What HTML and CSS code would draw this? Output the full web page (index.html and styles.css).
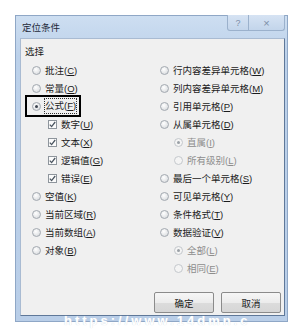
FILE: index.html
```html
<!DOCTYPE html>
<html lang="zh">
<head>
<meta charset="utf-8">
<link rel="stylesheet" href="styles.css">
</head>
<body>
<div class="window">
  <div class="titlebar">
    <span class="title">定位条件</span>
    <div class="tbtns">
      <span class="tbtn help">?</span>
      <span class="tbtn close">×</span>
    </div>
  </div>
  <div class="panel">
    <div class="label">选择</div>
    <div class="cols">
      <div class="col left">
        <div class="row"><span class="radio"></span><span>批注(<u>C</u>)</span></div>
        <div class="row"><span class="radio"></span><span>常量(<u>O</u>)</span></div>
        <div class="row"><span class="mark"><span class="radio on"></span><span class="focus">公式(<u>F</u>)</span></span></div>
        <div class="row sub"><span class="check"><svg viewBox="0 0 9 9" width="9" height="9"><polyline points="1.8,4.6 3.6,6.6 7.2,2" fill="none" stroke="#4b5560" stroke-width="1.3"/></svg></span><span>数字(<u>U</u>)</span></div>
        <div class="row sub"><span class="check"><svg viewBox="0 0 9 9" width="9" height="9"><polyline points="1.8,4.6 3.6,6.6 7.2,2" fill="none" stroke="#4b5560" stroke-width="1.3"/></svg></span><span>文本(<u>X</u>)</span></div>
        <div class="row sub"><span class="check"><svg viewBox="0 0 9 9" width="9" height="9"><polyline points="1.8,4.6 3.6,6.6 7.2,2" fill="none" stroke="#4b5560" stroke-width="1.3"/></svg></span><span>逻辑值(<u>G</u>)</span></div>
        <div class="row sub"><span class="check"><svg viewBox="0 0 9 9" width="9" height="9"><polyline points="1.8,4.6 3.6,6.6 7.2,2" fill="none" stroke="#4b5560" stroke-width="1.3"/></svg></span><span>错误(<u>E</u>)</span></div>
        <div class="row"><span class="radio"></span><span>空值(<u>K</u>)</span></div>
        <div class="row"><span class="radio"></span><span>当前区域(<u>R</u>)</span></div>
        <div class="row"><span class="radio"></span><span>当前数组(<u>A</u>)</span></div>
        <div class="row"><span class="radio"></span><span>对象(<u>B</u>)</span></div>
      </div>
      <div class="col right">
        <div class="row"><span class="radio"></span><span>行内容差异单元格(<u>W</u>)</span></div>
        <div class="row"><span class="radio"></span><span>列内容差异单元格(<u>M</u>)</span></div>
        <div class="row"><span class="radio"></span><span>引用单元格(<u>P</u>)</span></div>
        <div class="row"><span class="radio"></span><span>从属单元格(<u>D</u>)</span></div>
        <div class="row sub2 dis"><span class="radio on"></span><span>直属(<u>I</u>)</span></div>
        <div class="row sub2 dis"><span class="radio"></span><span>所有级别(<u>L</u>)</span></div>
        <div class="row"><span class="radio"></span><span>最后一个单元格(<u>S</u>)</span></div>
        <div class="row"><span class="radio"></span><span>可见单元格(<u>Y</u>)</span></div>
        <div class="row"><span class="radio"></span><span>条件格式(<u>T</u>)</span></div>
        <div class="row"><span class="radio"></span><span>数据验证(<u>V</u>)</span></div>
        <div class="row sub2 dis"><span class="radio on"></span><span>全部(<u>L</u>)</span></div>
        <div class="row sub2 dis"><span class="radio"></span><span>相同(<u>E</u>)</span></div>
      </div>
    </div>
    <div class="buttons">
      <span class="btn">确定</span>
      <span class="btn">取消</span>
    </div>
  </div>
</div>
<div class="watermark">https://www.14dmn.c</div>
</body>
</html>
```

FILE: styles.css
```css
html, body {
  margin: 0;
  padding: 0;
  background: #ffffff;
}
body {
  position: relative;
  width: 302px;
  height: 334px;
  overflow: hidden;
  font-family: "Liberation Sans", "Noto Sans CJK SC", sans-serif;
  font-size: 9.5px;
  color: #1b1b1b;
}
.window {
  margin: 15px 0 0 15px;
  width: 273px;
  height: 307px;
  box-sizing: border-box;
  border: 1px solid #8fa7c6;
  background: linear-gradient(#cddef1, #bcd1ea 40px, #b9cee8);
  display: flex;
  flex-direction: column;
}
.titlebar {
  height: 22px;
  display: flex;
  align-items: center;
  padding-left: 6px;
}
.title {
  flex: 1;
  color: #1e2a3a;
}
.tbtns {
  align-self: flex-start;
  margin-top: -1px;
  margin-right: 2px;
  display: flex;
}
.tbtn {
  height: 15px;
  border: 1px solid #9bb1cc;
  border-top: none;
  display: flex;
  align-items: center;
  justify-content: center;
  color: #7d8fa8;
  font-size: 9px;
  background: linear-gradient(#d6e3f3, #c3d5eb);
}
.help {
  width: 20px;
  border-radius: 0 0 0 3px;
}
.close {
  width: 35px;
  border-left: none;
  border-radius: 0 0 3px 0;
  font-size: 11px;
}
.panel {
  flex: 1;
  margin: 0 2px 5px 4px;
  background: #f0f0f0;
  border-top: 1px solid #a9bbd2;
  border-left: 1px solid #a9bbd2;
  border-right: 1px solid #5f7899;
  border-bottom: 1px solid #5f7899;
  display: flex;
  flex-direction: column;
  padding-top: 5px;
}
.label {
  height: 16px;
  line-height: 16px;
  padding-left: 4px;
  margin-bottom: 1px;
}
.cols {
  display: flex;
}
.col.left {
  width: 139px;
  box-sizing: border-box;
  padding-left: 11px;
}
.col.right {
  flex: 1;
}
.row {
  height: 18px;
  display: flex;
  align-items: center;
  gap: 4px;
  white-space: nowrap;
}
.row u {
  text-decoration: underline;
  text-underline-offset: 1px;
}
.row.sub {
  padding-left: 16px;
}
.row.sub2 {
  padding-left: 14px;
}
.row.dis {
  color: #8d8d8d;
}
.radio {
  width: 9px;
  height: 9px;
  box-sizing: border-box;
  border-radius: 50%;
  border: 1px solid #a3a9b0;
  background: radial-gradient(circle at 40% 35%, #ffffff, #e4e6e8 60%, #d0d4d8);
  flex: none;
  position: relative;
}
.radio.on::after {
  content: "";
  position: absolute;
  left: 2px;
  top: 2px;
  width: 3px;
  height: 3px;
  border-radius: 50%;
  background: #3c4450;
}
.dis .radio {
  border-color: #c4c8cc;
  background: #f4f4f4;
}
.dis .radio.on::after {
  background: #9aa0a6;
}
.check {
  width: 9px;
  height: 9px;
  box-sizing: border-box;
  border: 1px solid #8e959c;
  background: #fbfbfb;
  flex: none;
  display: flex;
}
.check svg {
  margin: -1px;
}
.mark {
  position: relative;
  display: flex;
  align-items: center;
  gap: 4px;
  height: 18px;
}
.mark::before {
  content: "";
  position: absolute;
  left: -7px;
  right: -5px;
  top: -2px;
  bottom: -2px;
  border: 2px solid #000;
}
.focus {
  outline: 1px dotted #333;
  outline-offset: 0;
  line-height: 14px;
}
.buttons {
  margin-top: auto;
  display: flex;
  justify-content: flex-end;
  gap: 7px;
  padding: 0 3px 2px 0;
}
.btn {
  width: 60px;
  height: 21px;
  box-sizing: border-box;
  border: 1px solid #8b8b8b;
  border-radius: 2px;
  background: linear-gradient(#f6f6f6, #ececec 50%, #dcdcdc 51%, #d6d6d6);
  display: flex;
  align-items: center;
  justify-content: center;
  color: #1b1b1b;
}
.watermark {
  position: absolute;
  left: 64px;
  top: 313px;
  font-family: "Liberation Sans", sans-serif;
  font-weight: bold;
  font-size: 13px;
  letter-spacing: 3px;
  color: #ffffff;
  text-shadow: 0 0 1px #c8d2de;
}
```
